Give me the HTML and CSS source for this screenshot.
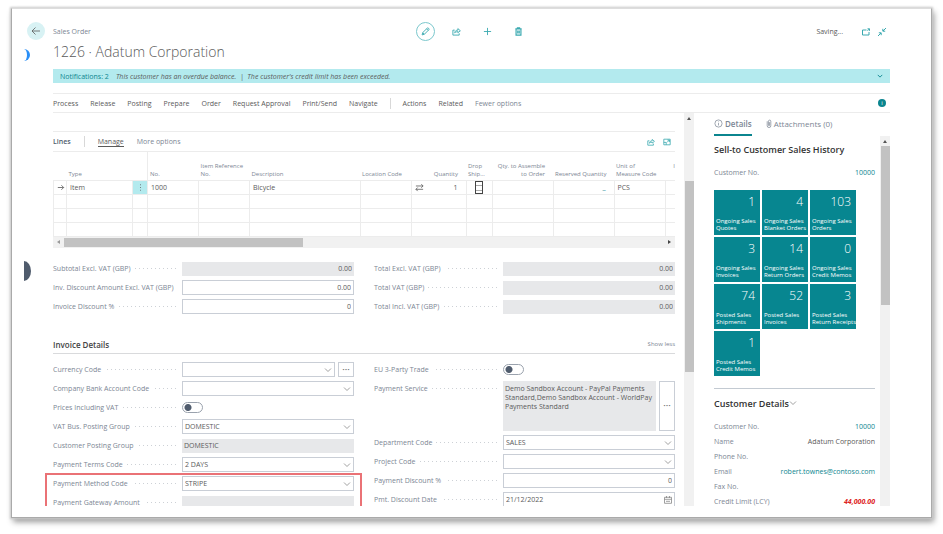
FILE: index.html
```html
<!DOCTYPE html>
<html lang="en">
<head>
<meta charset="utf-8">
<title>Sales Order 1226 - Adatum Corporation</title>
<link rel="stylesheet" href="styles.css">
</head>
<body>
<svg class="defs" aria-hidden="true">
  <symbol id="chevron" viewBox="0 0 8 8"><path d="M1 2.5 4 5.5 7 2.5"/></symbol>
  <symbol id="share" viewBox="0 0 10 10"><path d="M3 3.5H1v5.500h7V7M3 6.500c.3-2 1.500-3 3.500-3V1.800L9.300 4.200 6.500 6.300V5.200C5 5.200 4 5.500 3 6.500z"/></symbol>
</svg>
<div class="frame">
  <aside class="rail">
    <button class="back" aria-label="Back"><svg viewBox="0 0 18 18"><path d="M13 9H5M8.500 5.500 5 9l3.500 3.500"/></svg></button>
    <span class="spinner"></span>
    <span class="knob"></span>
  </aside>
  <main class="page">
    <header class="topbar">
      <span class="kind">Sales Order</span>
      <div class="tools">
        <button class="tool ring" aria-label="Edit"><svg viewBox="0 0 10 10"><path d="M1.200 8.800 1.900 6.300 7 1.200Q7.700.800 8.500 1.500T8.800 3L3.700 8.100zM6.200 2l1.800 1.800M1.900 6.300l1.800 1.800"/></svg></button>
        <button class="tool" aria-label="Share"><svg viewBox="0 0 10 10"><use href="#share"/></svg></button>
        <button class="tool" aria-label="New"><svg viewBox="0 0 10 10"><path d="M5 1v8M1 5h8"/></svg></button>
        <button class="tool" aria-label="Delete"><svg viewBox="0 0 10 10"><path d="M1.500 2h7M3.800 2V1h2.400v1M2.300 2v7h5.400V2M4.200 3.800v3.500M5.800 3.800v3.500" class="bold"/></svg></button>
      </div>
      <div class="status">
        <span class="saving">Saving...</span>
        <button class="mini" aria-label="Open in new window"><svg viewBox="0 0 8 8"><path d="M4.500 2H.500v5h6.500V4M5.500.800h2v2M7.500.800 5.500 2.800"/></svg></button>
        <button class="mini" aria-label="Collapse"><svg viewBox="0 0 8 8"><path d="M8 0 5 3M4.800.800V3.200H7.200M0 8l3-3M.800 4.800H3.200V7.200"/></svg></button>
      </div>
    </header>
    <h1>1226 · Adatum Corporation</h1>
    <div class="notice">
      <a href="#notifications">Notifications: 2</a>
      <em>This customer has an overdue balance. &nbsp;|&nbsp; The customer's credit limit has been exceeded.</em>
      <svg class="chev"><use href="#chevron"/></svg>
    </div>
    <nav class="menu">
      <a href="#process">Process</a><a href="#release">Release</a><a href="#posting">Posting</a><a href="#prepare">Prepare</a><a href="#order">Order</a><a href="#approval">Request Approval</a><a href="#print">Print/Send</a><a href="#navigate">Navigate</a>
      <span class="bar"></span>
      <a href="#actions">Actions</a><a href="#related">Related</a><a href="#fewer" class="soft">Fewer options</a>
      <button class="info" aria-label="Information">i</button>
    </nav>
    <div class="body">
      <div class="document">
        <section class="lines">
          <div class="lines-head">
            <h2>Lines</h2><span class="bar"></span>
            <a href="#manage" class="active">Manage</a><a href="#more">More options</a>
            <span class="lines-icons">
              <button class="tool-sm" aria-label="Share lines"><svg viewBox="0 0 10 10"><use href="#share"/></svg></button>
              <button class="tool-sm" aria-label="Expand lines"><svg viewBox="0 0 10 10"><path d="M1 1.500h8v7H1zM5.500 2.500H8V5M8 2.500 5 5.500M1 5.500h3v3"/></svg></button>
            </span>
          </div>
          <table>
            <colgroup><col class="c-arrow"><col class="c-type"><col class="c-dots"><col class="c-ref"><col class="c-ref"><col><col class="c-ref"><col class="c-qty"><col class="c-drop"><col class="c-wide"><col class="c-wide"><col class="c-ref"><col class="c-last"></colgroup>
            <thead><tr><th></th><th>Type</th><th class="edge"></th><th>No.</th><th>Item Reference<br>No.</th><th>Description</th><th>Location Code</th><th class="num">Quantity</th><th>Drop<br>Ship...</th><th class="num">Qty. to Assemble<br>to Order</th><th class="num">Reserved Quantity</th><th>Unit of<br>Measure Code</th><th class="last">I<br>&nbsp;</th></tr></thead>
            <tbody>
              <tr><td class="pad0"><svg class="glyph" viewBox="0 0 10 10"><path d="M2 5h6.500M6 2.500 8.500 5 6 7.500"/></svg></td><td>Item</td><td class="pad0 rowmenu"><svg class="glyph" viewBox="0 0 10 10"><path d="M5 1.500v1M5 4.500v1M5 7.500v1"/></svg></td><td>1000</td><td></td><td>Bicycle</td><td></td><td class="num"><div class="qty"><svg class="glyph" viewBox="0 0 10 10"><path d="M1 3.300h8M7 1.300l2 2-2 2M9 7H1M3 5 1 7l2 2"/></svg>1</div></td><td class="pad0"><input type="checkbox" aria-label="Drop shipment"></td><td></td><td class="num"><a href="#reserved">_</a></td><td>PCS</td><td></td></tr>
              <tr><td></td><td></td><td></td><td></td><td></td><td></td><td></td><td></td><td></td><td></td><td></td><td></td><td></td></tr>
              <tr><td></td><td></td><td></td><td></td><td></td><td></td><td></td><td></td><td></td><td></td><td></td><td></td><td></td></tr>
              <tr><td></td><td></td><td></td><td></td><td></td><td></td><td></td><td></td><td></td><td></td><td></td><td></td><td></td></tr>
            </tbody>
          </table>
          <div class="hscroll"><span class="tri left"></span><span class="thumb"></span><span class="tri right"></span></div>
        </section>
        <section class="columns totals">
          <div class="stack">
            <div class="field"><label for="f1">Subtotal Excl. VAT (GBP)</label><input id="f1" class="num" value="0.00" readonly></div>
            <div class="field"><label for="f2">Inv. Discount Amount Excl. VAT (GBP)</label><input id="f2" class="num" value="0.00"></div>
            <div class="field"><label for="f3">Invoice Discount %</label><input id="f3" class="num" value="0"></div>
          </div>
          <div class="stack">
            <div class="field"><label for="f4">Total Excl. VAT (GBP)</label><input id="f4" class="num" value="0.00" readonly></div>
            <div class="field"><label for="f5">Total VAT (GBP)</label><input id="f5" class="num" value="0.00" readonly></div>
            <div class="field"><label for="f6">Total Incl. VAT (GBP)</label><input id="f6" class="num" value="0.00" readonly></div>
          </div>
        </section>
        <section>
          <div class="section-head"><h2>Invoice Details</h2><a href="#less">Show less</a></div>
          <div class="columns">
            <div class="stack">
              <div class="field"><label for="g1">Currency Code</label><span class="pick"><select id="g1"><option></option></select><svg class="chev"><use href="#chevron"/></svg></span><button class="more" aria-label="Currency details">···</button></div>
              <div class="field"><label for="g2">Company Bank Account Code</label><span class="pick"><select id="g2"><option></option></select><svg class="chev"><use href="#chevron"/></svg></span></div>
              <div class="field"><label for="g3">Prices Including VAT</label><input id="g3" type="checkbox" class="switch"></div>
              <div class="field"><label for="g4">VAT Bus. Posting Group</label><span class="pick"><select id="g4"><option>DOMESTIC</option></select><svg class="chev"><use href="#chevron"/></svg></span></div>
              <div class="field"><label for="g5">Customer Posting Group</label><input id="g5" value="DOMESTIC" readonly></div>
              <div class="field"><label for="g6">Payment Terms Code</label><span class="pick"><select id="g6"><option>2 DAYS</option></select><svg class="chev"><use href="#chevron"/></svg></span></div>
              <div class="stack marked">
                <div class="field"><label for="g7">Payment Method Code</label><span class="pick"><select id="g7"><option>STRIPE</option></select><svg class="chev"><use href="#chevron"/></svg></span></div>
                <div class="field"><label for="g8">Payment Gateway Amount</label><input id="g8" readonly></div>
              </div>
            </div>
            <div class="stack">
              <div class="field"><label for="h1">EU 3-Party Trade</label><input id="h1" type="checkbox" class="switch"></div>
              <div class="field tall"><label for="h2">Payment Service</label><textarea id="h2" readonly>Demo Sandbox Account - PayPal Payments Standard,Demo Sandbox Account - WorldPay Payments Standard</textarea><button class="more" aria-label="Choose payment service">···</button></div>
              <div class="field"><label for="h3">Department Code</label><span class="pick"><select id="h3"><option>SALES</option></select><svg class="chev"><use href="#chevron"/></svg></span></div>
              <div class="field"><label for="h4">Project Code</label><span class="pick"><select id="h4"><option></option></select><svg class="chev"><use href="#chevron"/></svg></span></div>
              <div class="field"><label for="h5">Payment Discount %</label><input id="h5" class="num" value="0"></div>
              <div class="field"><label for="h6">Pmt. Discount Date</label><span class="pick"><input id="h6" value="21/12/2022"><svg class="chev" viewBox="0 0 8 8"><path d="M.500 1.300h7v6h-7zM.500 3.300h7M2.500 0v2M5.500 0v2M2 5.300h4"/></svg></span></div>
            </div>
          </div>
        </section>
      </div>
      <div class="vscroll"><span class="tri up"></span><span class="thumb"></span></div>
      <aside class="side">
        <div class="tabs">
          <a href="#details" class="tab current"><svg viewBox="0 0 10 10"><circle cx="5" cy="5" r="4"/><path d="M5 4.500v2.700M5 2.800v.8"/></svg>Details</a>
          <a href="#attachments" class="tab"><svg class="clip" viewBox="0 0 6 10"><path d="M1 2.500V7.500a2 2 0 0 0 4 0V2.500a1.300 1.300 0 0 0-2.600 0V7a.6.6 0 0 0 1.200 0V3.500"/></svg>Attachments (0)</a>
        </div>
        <div class="side-body">
          <div class="facts">
            <h3>Sell-to Customer Sales History</h3>
            <div class="fact"><span>Customer No.</span><a href="#10000">10000</a></div>
            <div class="tiles">
              <a href="#t1" class="tile"><b>1</b><span>Ongoing Sales<br>Quotes</span></a>
              <a href="#t2" class="tile"><b>4</b><span>Ongoing Sales<br>Blanket Orders</span></a>
              <a href="#t3" class="tile"><b>103</b><span>Ongoing Sales<br>Orders</span></a>
              <a href="#t4" class="tile"><b>3</b><span>Ongoing Sales<br>Invoices</span></a>
              <a href="#t5" class="tile"><b>14</b><span>Ongoing Sales<br>Return Orders</span></a>
              <a href="#t6" class="tile"><b>0</b><span>Ongoing Sales<br>Credit Memos</span></a>
              <a href="#t7" class="tile"><b>74</b><span>Posted Sales<br>Shipments</span></a>
              <a href="#t8" class="tile"><b>52</b><span>Posted Sales<br>Invoices</span></a>
              <a href="#t9" class="tile"><b>3</b><span>Posted Sales<br>Return Receipts</span></a>
              <a href="#t10" class="tile"><b>1</b><span>Posted Sales<br>Credit Memos</span></a>
            </div>
            <h3 class="ruled">Customer Details<svg class="chev"><use href="#chevron"/></svg></h3>
            <div class="fact"><span>Customer No.</span><a href="#10000">10000</a></div>
            <div class="fact"><span>Name</span><span class="value">Adatum Corporation</span></div>
            <div class="fact"><span>Phone No.</span></div>
            <div class="fact"><span>Email</span><a href="mailto:robert.townes@contoso.com">robert.townes@contoso.com</a></div>
            <div class="fact"><span>Fax No.</span></div>
            <div class="fact"><span>Credit Limit (LCY)</span><strong>44,000.00</strong></div>
          </div>
          <div class="vscroll"><span class="tri up"></span><span class="thumb"></span></div>
        </div>
      </aside>
    </div>
  </main>
</div>
</body>
</html>
```
FILE: styles.css
```css
:root {
  --teal: #0b858f;
  --icon: #3aa9b0;
  --aqua: #b3eaee;
  --ink: #5a5a5a;
  --soft: #7c8694;
  --line: #ececec;
  --field: #c9ced6;
  --fill: #e7e8ea;
}
* { box-sizing: border-box; }
body {
  margin: 0;
  padding: 8px 11px 16px;
  background: #fff;
  font: 7px/9px "Open Sans", "Noto Sans", sans-serif;
  color: var(--ink);
}
a { color: inherit; text-decoration: none; }
button, input, select, textarea {
  font: inherit; color: inherit; margin: 0; padding: 0;
  border: 0; border-radius: 0; background: none; appearance: none;
}
h1, h2, h3 { margin: 0; font-weight: 400; }
svg { fill: none; stroke: currentColor; stroke-width: 1; flex: none; }
.defs { display: none; }
.bold { stroke-width: 1.3; }

.frame {
  display: flex;
  height: calc(100vh - 24px);
  padding-bottom: 11px;
  background: #fff;
  border: 1px solid #aaa;
  border-top-color: #ddd;
  box-shadow: 0 0 2px 1px #ccc, 2px 4px 6px 0 #999;
  overflow: hidden;
}
.rail {
  flex: none;
  width: 41px;
  padding: 13px 0 0 12px;
  display: flex;
  flex-direction: column;
  color: var(--ink);
}
.back { width: 18px; height: 18px; margin-left: 3px; border-radius: 50%; background: #d8f2f4; }
.back svg { display: block; width: 18px; height: 18px; stroke-width: .8; }
.spinner { width: 6px; height: 12px; margin-top: 9px; border-right: 3px solid #2a8ff7; border-radius: 0 6px 6px 0 / 0 6px 6px 0; }
.knob { width: 7px; height: 20px; margin-top: 200px; background: #505c6d; border-radius: 0 7px 7px 0 / 0 10px 10px 0; }

.page { flex: 1; min-width: 0; margin-right: 41px; padding-top: 13px; display: flex; flex-direction: column; }
.topbar { display: grid; grid-template-columns: 1fr auto 1fr; align-items: center; height: 19px; flex: none; }
.kind { color: var(--soft); }
.tools { display: flex; gap: 12px; color: var(--icon); }
.tool { width: 19px; height: 19px; display: grid; place-items: center; }
.tool svg { width: 9px; height: 9px; }
.ring { border: 1px solid #7cc8cd; border-radius: 50%; }
.status { display: flex; justify-content: flex-end; align-items: center; gap: 8px; padding-right: 4px; color: var(--icon); }
.saving { color: var(--ink); margin-right: 11px; }
.mini { display: grid; }
.mini svg { width: 8px; height: 8px; }
h1 { flex: none; font-size: 14px; line-height: 22px; font-weight: 300; white-space: nowrap; }
.notice {
  flex: none; display: flex; align-items: center; gap: 7px;
  height: 14px; margin-top: 6px; padding: 0 7px; background: var(--aqua); white-space: nowrap;
}
.notice a { color: var(--teal); }
.chev { width: 8px; height: 8px; color: #888; stroke-width: .8; }
.notice .chev { margin-left: auto; width: 6px; color: var(--teal); stroke-width: 1.2; }
.menu {
  flex: none; display: flex; align-items: center; gap: 12px; height: 20px; margin-top: 10px;
  border-top: 1px solid var(--line); border-bottom: 1px solid var(--line); white-space: nowrap;
}
.bar { width: 1px; height: 11px; background: #d8d8d8; }
.soft { color: var(--soft); }
.info { width: 8px; height: 8px; margin: 0 4px 0 auto; border-radius: 50%; background: var(--teal); color: #fff; font-size: 6px; line-height: 8px; }

.body { flex: 1; min-height: 0; margin-left: -10px; padding-left: 10px; display: grid; grid-template-columns: minmax(0, 1fr) 10px 196px; overflow: hidden; }
.document { min-width: 0; padding-top: 18px; margin-right: 9px; }
.lines { border-top: 1px solid var(--line); overflow: hidden; }
.lines-head { display: flex; align-items: center; gap: 13px; height: 20px; border-bottom: 1px solid var(--line); color: var(--soft); }
.lines-head h2 { font-size: 7px; font-weight: 600; color: #505c6d; }
.active { color: var(--ink); border-bottom: 1px solid var(--ink); }
.lines-icons { margin-left: auto; padding-right: 4px; display: flex; gap: 8px; color: var(--icon); }
.tool-sm { display: grid; }
.tool-sm svg { width: 8px; height: 8px; }

table { width: 100%; table-layout: fixed; border-collapse: collapse; }
.c-arrow { width: 13px; } .c-type { width: 66px; } .c-dots { width: 15px; } .c-ref { width: 51px; }
.c-qty { width: 55px; } .c-drop { width: 26px; } .c-wide { width: 61px; } .c-last { width: 10px; }
th { height: 28px; padding: 0 2px 2px; font-size: 6px; line-height: 8px; font-weight: 400; text-align: left; vertical-align: bottom; color: var(--soft); white-space: nowrap; }
th.edge { border-right: 1px solid var(--line); }
th.last { padding: 0 0 2px; text-align: right; }
td { height: 14px; padding: 0 3px; border: 1px solid var(--line); line-height: 9px; }
td:last-child { border-right: 0; }
.num { text-align: right; }
th.num, td.num { padding-right: 8px; }
td.num a { color: var(--teal); }
.pad0 { padding: 0; text-align: center; }
.rowmenu { background: var(--aqua); }
.glyph { width: 9px; height: 9px; vertical-align: top; stroke-width: .9; }
.qty { display: flex; justify-content: space-between; }
td input { display: block; width: 8px; height: 13px; margin: auto; border: 1px solid #444; background: linear-gradient(#aaa 1px, transparent 1px 5px, #aaa 5px 6px, transparent 6px) 0 3px no-repeat; }

.tri { width: 0; height: 0; border: 2px solid transparent; }
.tri.left { border-right: 3px solid #999; border-left: 0; }
.tri.right { border-left: 3px solid #444; border-right: 0; }
.tri.up { border-bottom: 3px solid #555; border-top: 0; }
.hscroll { display: flex; align-items: center; height: 11px; padding: 1px 4px; background: #f1f1f1; }
.hscroll .thumb { width: 39%; height: 9px; margin: 0 auto 0 4px; background: #c2c2c2; }
.vscroll { display: flex; flex-direction: column; align-items: center; background: #f1f1f1; padding-top: 4px; }
.vscroll .thumb { width: 9px; background: #c2c2c2; }
.body > .vscroll .thumb { height: 191px; margin-top: 61px; }
.side .vscroll .thumb { height: 159px; margin-top: 3px; }

.columns { display: grid; grid-template-columns: minmax(0, 1fr) minmax(0, 1fr); column-gap: 20px; align-items: start; }
.totals { margin: 13px 0 23px; }
.stack { display: grid; gap: 4px; }
.field { display: flex; height: 15px; gap: 3px; }
.field label {
  flex: none; width: 126px; display: flex; align-items: center; gap: 4px;
  color: var(--soft); white-space: nowrap; line-height: 15px; height: 15px;
}
.field label::after {
  content: ""; flex: 1; height: 1px;
  background: repeating-linear-gradient(to left, transparent 0 3px, #cdd1d6 3px 4px);
}
.field input:not(.switch), .field select { width: 100%; height: 15px; padding: 0 2px; border: 1px solid var(--field); line-height: 13px; background: #fff; }
.field input:not(.switch) { flex: 1; min-width: 0; }
.field input[readonly] { background: var(--fill); border-color: #fff; border-width: 1px 0 0; }
.pick { flex: 1; min-width: 0; position: relative; display: flex; }
.pick .chev { position: absolute; right: 3px; top: 4px; }
.more { width: 16px; border: 1px solid var(--field); font-size: 9px; line-height: 9px; font-weight: 600; color: #777; }
.switch { align-self: center; width: 21px; height: 11px; border: 1px solid #9aa2ad; border-radius: 6px; background: radial-gradient(circle at 5px 50%, #505c6d 3px, transparent 4px); }
.tall { height: 50px; }
.tall textarea { flex: 1; min-width: 0; padding: 3px 2px; background: var(--fill); resize: none; overflow: hidden; line-height: 9px; }
.marked { position: relative; }
.marked::before { content: ""; position: absolute; inset: -3px -8px -8px; border: 2px solid #ea7276; pointer-events: none; }
.section-head { display: flex; align-items: center; justify-content: space-between; height: 17px; margin-bottom: 8px; border-bottom: 1px solid #d9dadc; color: var(--soft); font-size: 6px; }
.section-head h2 { font-size: 8px; font-weight: 600; color: #444; }

.side { margin-left: 20px; display: flex; flex-direction: column; min-width: 0; min-height: 0; }
.tabs { flex: none; display: flex; gap: 14px; height: 23px; color: var(--soft); font-size: 8px; white-space: nowrap; }
.tab { display: flex; align-items: center; gap: 2px; border-bottom: 2px solid transparent; }
.tab svg { width: 9px; height: 9px; stroke-width: .8; }
.tab .clip { width: 6px; }
.current { font-weight: 600; border-color: var(--teal); }
.side-body { flex: 1; min-height: 0; display: grid; grid-template-columns: minmax(0, 1fr) 10px; column-gap: 5px; }
.facts { padding-top: 6px; min-height: 0; }
h3 { display: flex; align-items: center; height: 14px; margin-bottom: 9px; font-size: 9px; font-weight: 600; color: #333; white-space: nowrap; }
.fact { display: flex; justify-content: space-between; line-height: 15px; height: 15px; color: var(--soft); white-space: nowrap; }
.fact a { color: var(--teal); }
.value { color: var(--ink); }
.fact strong { color: #d22; font-weight: 700; font-style: italic; }
.tiles { display: grid; grid-template-columns: repeat(3, 46px); gap: 2px; margin: 10px 0 12px; }
.tile { height: 45px; padding: 5px 2px 3px; display: flex; flex-direction: column; justify-content: space-between; background: #078690; color: #fff; font-size: 6px; line-height: 7px; white-space: nowrap; }
.tile b { font-size: 12px; line-height: 14px; font-weight: 300; text-align: right; padding-right: 3px; }
.ruled { height: 22px; padding-top: 7px; border-top: 1px solid #c3cad2; }
```
